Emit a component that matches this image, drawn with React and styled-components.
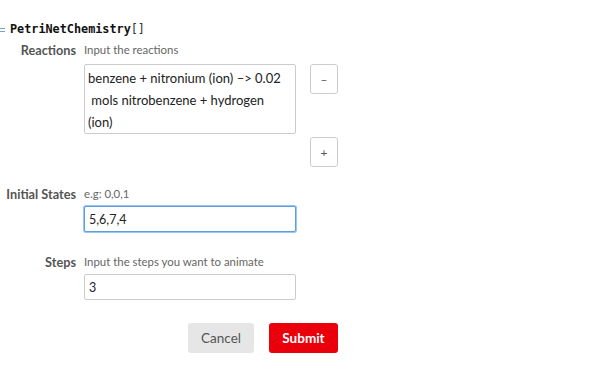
import styled, { createGlobalStyle } from "styled-components";

const Global = createGlobalStyle`
  body {
    margin: 0;
    background: #fff;
    font-family: "Lato", "Open Sans", sans-serif;
  }
`;

const Page = styled.div`
  padding: 20px 0 0 0;
  width: 598px;
  height: 371px;
  box-sizing: border-box;
`;

const TitleRow = styled.div`
  display: flex;
  align-items: center;
  height: 17px;
`;

const Marker = styled.svg`
  width: 5px;
  height: 6px;
  margin-right: 5px;
  margin-top: 3px;
`;

const Title = styled.span`
  font-family: "DejaVu Sans Mono", monospace;
  font-weight: bold;
  font-size: 11.8px;
  color: #111;
`;

const Brackets = styled.span`
  font-weight: normal;
  color: #333;
`;

const Form = styled.div`
  display: grid;
  grid-template-columns: 76px 212px 42px;
  column-gap: 8px;
  padding-top: 5px;
`;

const Label = styled.div`
  text-align: right;
  font-weight: bold;
  font-size: 12.7px;
  color: #555;
  line-height: 16px;
  margin-top: ${(p) => p.top || 0}px;
`;

const Hint = styled.div`
  font-size: 11.4px;
  color: #666;
  line-height: 16px;
  margin-top: ${(p) => p.top || 0}px;
`;

const Empty = styled.div``;

const Area = styled.textarea`
  grid-column: 2;
  margin-top: 6px;
  width: 212px;
  height: 70px;
  box-sizing: border-box;
  border: 1px solid #ccc;
  border-radius: 2px;
  padding: 2px 3px;
  font-family: "Lato", sans-serif;
  font-size: 13px;
  line-height: 22px;
  color: #222;
  resize: none;
  overflow: hidden;
  outline: none;
`;

const Input = styled.input`
  grid-column: 2;
  margin-top: 4px;
  width: 212px;
  height: 26px;
  box-sizing: border-box;
  border: 1px solid ${(p) => (p.focus ? "#5d9ee0" : "#ccc")};
  box-shadow: ${(p) => (p.focus ? "0 0 0 1px #9cc6ee" : "none")};
  border-radius: 2px;
  padding: 0 4px;
  font-family: "Lato", sans-serif;
  font-size: 12.5px;
  color: #222;
  outline: none;
`;

const Side = styled.div`
  padding-left: 6px;
  padding-top: ${(p) => p.top || 0}px;
`;

const SmallBtn = styled.button`
  width: 28px;
  height: 30px;
  border: 1px solid #ccc;
  border-radius: 3px;
  background: #fff;
  color: #555;
  font-family: "Lato", sans-serif;
  font-size: 12px;
  padding: 0;
`;

const Actions = styled.div`
  display: flex;
  gap: 15px;
  padding-left: 188px;
  margin-top: 23px;
`;

const Btn = styled.button`
  height: 30px;
  width: ${(p) => (p.primary ? 69 : 66)}px;
  padding: 0;
  border: none;
  border-radius: 3px;
  background: ${(p) => (p.primary ? "#ea000a" : "#e6e6e6")};
  color: ${(p) => (p.primary ? "#fff" : "#555")};
  font-family: "Lato", sans-serif;
  font-weight: ${(p) => (p.primary ? "bold" : "normal")};
  font-size: 13.5px;
`;

export default function App() {
  return (
    <Page>
      <Global />
      <TitleRow>
        <Marker viewBox="0 0 5 6">
          <rect x="0" y="1" width="5" height="1" fill="#7aa3c8" />
          <rect x="0" y="4" width="5" height="1" fill="#7aa3c8" />
        </Marker>
        <Title>
          PetriNetChemistry<Brackets>[]</Brackets>
        </Title>
      </TitleRow>
      <Form>
        <Label>Reactions</Label>
        <Hint>Input the reactions</Hint>
        <Empty />

        <Empty />
        <Area
          readOnly
          value={"benzene + nitronium (ion) –> 0.02\n mols nitrobenzene + hydrogen\n(ion)"}
        />
        <Side top={6}>
          <SmallBtn>–</SmallBtn>
        </Side>

        <Empty />
        <Empty />
        <Side top={3}>
          <SmallBtn>+</SmallBtn>
        </Side>

        <Label top={19}>Initial States</Label>
        <Hint top={19}>e.g: 0,0,1</Hint>
        <Empty />

        <Empty />
        <Input focus readOnly value="5,6,7,4" />
        <Empty />

        <Label top={22}>Steps</Label>
        <Hint top={22}>Input the steps you want to animate</Hint>
        <Empty />

        <Empty />
        <Input readOnly value="3" />
        <Empty />
      </Form>
      <Actions>
        <Btn>Cancel</Btn>
        <Btn primary>Submit</Btn>
      </Actions>
    </Page>
  );
}
